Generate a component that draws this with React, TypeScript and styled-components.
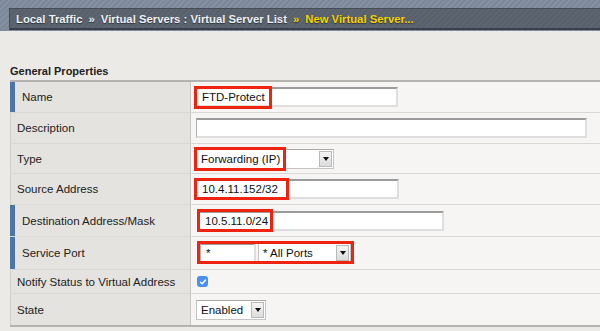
import React from "react";
import styled, { createGlobalStyle } from "styled-components";

const Global = createGlobalStyle`
  html, body { margin: 0; padding: 0; background: #ebeae6; }
  body { font-family: "Liberation Sans", Arial, Helvetica, sans-serif; color: #222; }
  * { box-sizing: border-box; }
`;

const Page = styled.div`
  width: 600px;
  height: 331px;
  overflow: hidden;
  background: #ebeae6;
`;

const Masthead = styled.div`
  padding: 8px 0 1px 9px;
  background: repeating-linear-gradient(
    135deg,
    #7c889a 0px,
    #7c889a 2px,
    #8591a3 2px,
    #8591a3 4px
  );
`;

const Crumbs = styled.div`
  height: 22px;
  display: flex;
  align-items: center;
  gap: 6px;
  padding-left: 6px;
  background: repeating-linear-gradient(
    135deg,
    #58606c 0px,
    #58606c 2px,
    #5d6571 2px,
    #5d6571 4px
  );
  border: 1px solid #474d57;
  border-right: none;
  border-bottom: 2px solid #3b4048;
  font-size: 11.3px;
  font-weight: bold;
  white-space: nowrap;
  text-shadow: 0 1px 1px rgba(0, 0, 0, 0.5);
`;

const Crumb = styled.span<{ $current?: boolean }>`
  color: ${(p) => (p.$current ? "#f4d300" : "#eef0f2")};
`;

const Content = styled.div`
  padding: 33px 0 0 10px;
`;

const Heading = styled.div`
  font-size: 11px;
  font-weight: bold;
  line-height: 14px;
  margin-bottom: 2px;
`;

const Table = styled.div`
  border-top: 2px solid #b4b3b0;
  border-bottom: 2px solid #b4b3b0;
`;

const Row = styled.div<{ $h: number }>`
  display: grid;
  grid-template-columns: 181px 1fr;
  height: ${(p) => p.$h}px;
  border-bottom: 1px solid #d9d8d4;
  &:last-child { border-bottom: none; }
`;

const Label = styled.div<{ $req?: boolean }>`
  display: flex;
  align-items: center;
  background: #e4e3df;
  border-right: 1px solid #c9c8c4;
  border-left: ${(p) => (p.$req ? "5px solid #4a75a6" : "1px solid #d0cfcb")};
  padding-left: ${(p) => (p.$req ? "7px" : "6px")};
  font-size: 11.5px;
  color: #222;
`;

const Value = styled.div`
  display: flex;
  align-items: center;
  gap: 2px;
  background: #f6f5f3;
  padding-left: 5px;
`;

const Field = styled.div<{ $indent?: number }>`
  position: relative;
  display: flex;
  gap: 2px;
  margin-left: ${(p) => p.$indent ?? 0}px;
`;

const Highlight = styled.span<{ $l: number; $t: number; $w: number; $h: number }>`
  position: absolute;
  left: ${(p) => p.$l}px;
  top: ${(p) => p.$t}px;
  width: ${(p) => p.$w}px;
  height: ${(p) => p.$h}px;
  border: 3px solid #ee2410;
  pointer-events: none;
`;

const TextBox = styled.div<{ $w: number }>`
  width: ${(p) => p.$w}px;
  height: 20px;
  display: flex;
  align-items: center;
  padding-left: 5px;
  background: #fff;
  border-top: 2px solid #9b9b9b;
  border-left: 1px solid #b3b3b3;
  border-right: 2px solid #dedede;
  border-bottom: 2px solid #dedede;
  font-size: 11.5px;
  color: #111;
  white-space: nowrap;
`;

const SelectBox = styled.div<{ $w: number }>`
  width: ${(p) => p.$w}px;
  height: 20px;
  display: flex;
  align-items: center;
  justify-content: space-between;
  background: #fff;
  border: 1px solid #c4c4c4;
  border-top-color: #a9a9a9;
  padding: 0 1px 0 4px;
  font-size: 11.5px;
  color: #111;
  white-space: nowrap;
`;

const Arrow = styled.span`
  width: 13px;
  height: 16px;
  display: flex;
  align-items: center;
  justify-content: center;
  background: linear-gradient(#f4f4f4, #dcdcdc);
  border: 1px solid #b9b9b9;
  &::after {
    content: "";
    border-left: 3px solid transparent;
    border-right: 3px solid transparent;
    border-top: 4px solid #111;
  }
`;

const Check = styled.span`
  width: 11px;
  height: 11px;
  border-radius: 3px;
  background: #4b8ff2;
  display: flex;
  align-items: center;
  justify-content: center;
  margin-left: 1px;
`;

const Select = ({ w, text }: { w: number; text: string }) => (
  <SelectBox $w={w}>
    <span>{text}</span>
    <Arrow />
  </SelectBox>
);

export default function App() {
  return (
    <Page>
      <Global />
      <Masthead>
        <Crumbs>
          <Crumb>Local Traffic</Crumb>
          <Crumb>»</Crumb>
          <Crumb>Virtual Servers : Virtual Server List</Crumb>
          <Crumb $current>»</Crumb>
          <Crumb $current>New Virtual Server...</Crumb>
        </Crumbs>
      </Masthead>
      <Content>
        <Heading>General Properties</Heading>
        <Table>
          <Row $h={31}>
            <Label $req>Name</Label>
            <Value>
              <Field>
                <TextBox $w={202}>FTD-Protect</TextBox>
                <Highlight $l={-2} $t={-1} $w={78} $h={23} />
              </Field>
            </Value>
          </Row>
          <Row $h={31}>
            <Label>Description</Label>
            <Value>
              <TextBox $w={391} />
            </Value>
          </Row>
          <Row $h={30}>
            <Label>Type</Label>
            <Value>
              <Field>
                <Select w={138} text="Forwarding (IP)" />
                <Highlight $l={-2} $t={-2} $w={92} $h={24} />
              </Field>
            </Value>
          </Row>
          <Row $h={31}>
            <Label>Source Address</Label>
            <Value>
              <Field>
                <TextBox $w={203}>10.4.11.152/32</TextBox>
                <Highlight $l={-2} $t={-1} $w={95} $h={22} />
              </Field>
            </Value>
          </Row>
          <Row $h={32}>
            <Label $req>Destination Address/Mask</Label>
            <Value>
              <Field $indent={3}>
                <TextBox $w={245}>10.5.11.0/24</TextBox>
                <Highlight $l={-2} $t={-2} $w={76} $h={23} />
              </Field>
            </Value>
          </Row>
          <Row $h={33}>
            <Label $req>Service Port</Label>
            <Value>
              <Field $indent={4}>
                <TextBox $w={56}>*</TextBox>
                <Select w={93} text="* All Ports" />
                <Highlight $l={-3} $t={-2} $w={157} $h={23} />
              </Field>
            </Value>
          </Row>
          <Row $h={24}>
            <Label>Notify Status to Virtual Address</Label>
            <Value>
              <Check>
                <svg width="8" height="8" viewBox="0 0 8 8">
                  <path d="M1.5 4.2 L3.2 5.8 L6.5 2" fill="none" stroke="#fff" strokeWidth="1.4" strokeLinecap="round" strokeLinejoin="round" />
                </svg>
              </Check>
            </Value>
          </Row>
          <Row $h={31}>
            <Label>State</Label>
            <Value>
              <Select w={70} text="Enabled" />
            </Value>
          </Row>
        </Table>
      </Content>
    </Page>
  );
}
